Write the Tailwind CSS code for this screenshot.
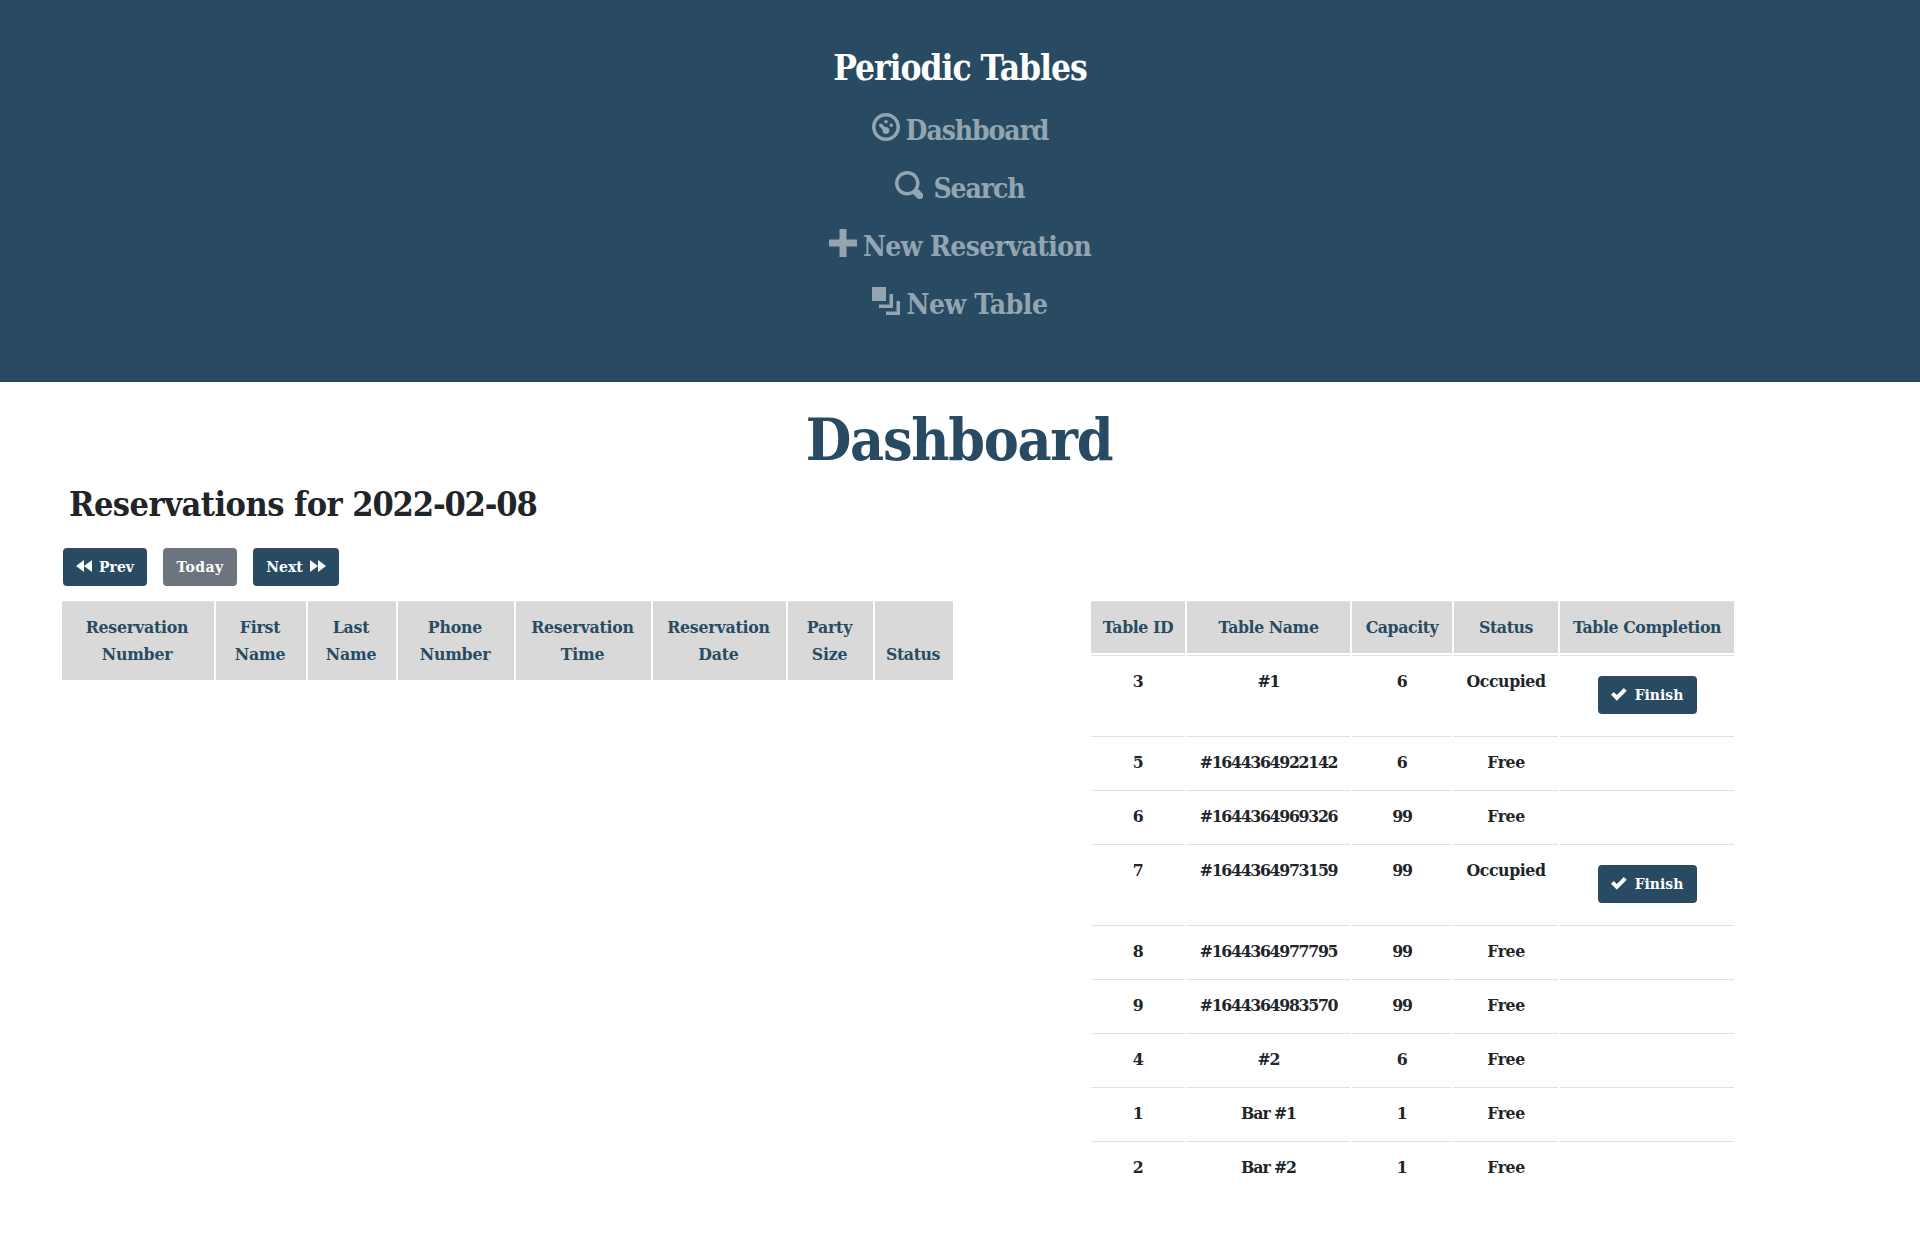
<!DOCTYPE html>
<html lang="en">
<head>
<meta charset="utf-8">
<title>Periodic Tables</title>
<script src="https://cdn.jsdelivr.net/npm/@tailwindcss/browser@4"></script>
</head>
<body class="bg-white text-[#212529] font-bold font-['Roboto_Slab','DejaVu_Serif_Condensed','DejaVu_Serif',serif]">
<svg class="hidden">
  <symbol id="dashboard" viewBox="0 0 8 8"><path d="M4 0c-2.2 0-4 1.8-4 4s1.8 4 4 4 4-1.8 4-4-1.8-4-4-4zm0 1c1.66 0 3 1.34 3 3s-1.34 3-3 3-3-1.34-3-3 1.34-3 3-3zm0 1c-.28 0-.5.22-.5.5s.22.5.5.5.5-.22.5-.5-.22-.5-.5-.5zm-1.66 1a.5.5 0 0 0-.19.84l.91.91c-.02.08-.06.16-.06.25 0 .55.45 1 1 1s1-.45 1-1-.45-1-1-1c-.09 0-.17.04-.25.06l-.91-.91a.5.5 0 0 0-.44-.16.5.5 0 0 0-.06 0zm3.16 0c-.28 0-.5.22-.5.5s.22.5.5.5.5-.22.5-.5-.22-.5-.5-.5z"/></symbol>
  <symbol id="search" viewBox="0 0 8 8"><path d="M3.5 0c-1.93 0-3.5 1.57-3.5 3.5s1.57 3.5 3.5 3.5c.59 0 1.17-.14 1.66-.41a1 1 0 0 0 .13.13l1 1a1.02 1.02 0 1 0 1.44-1.44l-1-1a1 1 0 0 0-.16-.13c.27-.49.44-1.06.44-1.66 0-1.93-1.55-3.5-3.5-3.5zm0 1c1.39 0 2.5 1.11 2.5 2.5 0 .66-.24 1.27-.66 1.72l-.03.03a1 1 0 0 0-.13.13c-.44.4-1.04.63-1.69.63-1.39 0-2.5-1.11-2.5-2.5s1.11-2.5 2.5-2.5z"/></symbol>
  <symbol id="plus" viewBox="0 0 8 8"><path d="M3 0v3h-3v2h3v3h2v-3h3v-2h-3v-3h-2z"/></symbol>
  <symbol id="layers" viewBox="0 0 8 8"><path d="M0 0v4h4v-4h-4zm5 2v3h-3v1h4v-4h-1zm2 2v3h-3v1h4v-4h-1z"/></symbol>
  <symbol id="back" viewBox="0 0 8 8"><path d="M4 0.5l-4 3 4 3v-6zm0 3l4 3v-6l-4 3z"/></symbol>
  <symbol id="forward" viewBox="0 0 8 8"><path d="M0 0.5v6l4-3-4-3zm4 3v3l4-3-4-3v3z"/></symbol>
  <symbol id="check" viewBox="0 0 8 8"><path d="M6.41 .5l-.69.72-2.78 2.78-.81-.78-.72-.72-1.41 1.41.72.72 1.5 1.5.69.72.72-.72 3.5-3.5.72-.72-1.44-1.41z"/></symbol>
</svg>

<nav class="h-[382px] bg-[#284b63] border-b border-[#23435a] flex flex-col items-center pt-[39px] text-[28px] leading-[58px]">
  <a class="text-white text-[35px] leading-[58px] tracking-[-1px] h-[63px]">Periodic Tables</a>
  <a class="flex items-start gap-1.5 h-[58px] text-white/50 tracking-[-1.05px]"><svg class="size-7 mt-[11px] fill-current"><use href="#dashboard"/></svg>Dashboard</a>
  <a class="flex items-start gap-2.5 h-[58px] text-white/50 tracking-[-1.05px]"><svg class="size-7 mt-[11px] fill-current"><use href="#search"/></svg>Search</a>
  <a class="flex items-start gap-1.5 h-[58px] text-white/50 tracking-[-0.6px]"><svg class="size-7 mt-[11px] fill-current"><use href="#plus"/></svg>New Reservation</a>
  <a class="flex items-start gap-1.5 h-[58px] text-white/50 tracking-[-0.45px]"><svg class="size-7 mt-[11px] fill-current"><use href="#layers"/></svg>New Table</a>
</nav>

<main>
  <h1 class="pt-[22px] pr-[2px] h-[92px] text-center text-[58.5px] leading-[72px] tracking-[-1.3px] text-[#284b63]">Dashboard</h1>
  <h2 class="pl-[69px] pt-2 h-[74px] text-[34px] leading-[44px] tracking-[-0.5px]">Reservations for <span class="tracking-[-1.15px]">2022-02-08</span></h2>

  <div class="ml-[63px] flex gap-4 h-[51px] text-[15.5px] leading-[18px] text-white">
    <button class="w-[84px] h-[38px] rounded bg-[#284b63] flex justify-center items-center gap-[7px]"><svg class="size-4 fill-current"><use href="#back"/></svg>Prev</button>
    <button class="w-[74px] h-[38px] rounded bg-[#6c757d] tracking-[0.4px]">Today</button>
    <button class="w-[86px] h-[38px] rounded bg-[#284b63] flex justify-center items-center gap-[7px]">Next<svg class="size-4 fill-current"><use href="#forward"/></svg></button>
  </div>

  <div class="flex items-start text-[17.5px] leading-[27px] tracking-[-0.3px] text-center">
    <table class="ml-[60px] w-[895px] table-fixed border-separate border-spacing-[2px]">
      <colgroup><col class="w-[152px]"><col class="w-[90px]"><col class="w-[88px]"><col class="w-[116px]"><col class="w-[135px]"><col class="w-[133px]"><col class="w-[85px]"><col class="w-[78px]"></colgroup>
      <thead class="text-[#284b63] tracking-[-0.2px] [&_th]:bg-[#d9d9d9] [&_th]:border-t [&_th]:border-[#dee2e6] [&_th]:pt-3 [&_th]:pb-3 [&_th]:pr-[2px] [&_th]:align-bottom [&_th]:h-[79px]">
        <tr><th>Reservation<br>Number</th><th>First<br>Name</th><th>Last<br>Name</th><th>Phone<br>Number</th><th>Reservation<br>Time</th><th>Reservation<br>Date</th><th>Party<br>Size</th><th class="tracking-[-0.4px]">Status</th></tr>
      </thead>
    </table>

    <table class="ml-[134px] w-[647px] table-fixed border-separate border-spacing-[2px]">
      <colgroup><col class="w-[94px]"><col class="w-[163px]"><col class="w-[100px]"><col class="w-[104px]"><col class="w-[174px]"></colgroup>
      <thead class="text-[#284b63] tracking-[-0.4px] [&_th]:bg-[#d9d9d9] [&_th]:border-t [&_th]:border-[#dee2e6] [&_th]:py-3 [&_th]:h-[52px]">
        <tr><th>Table ID</th><th>Table Name</th><th>Capacity</th><th>Status</th><th>Table Completion</th></tr>
      </thead>
      <tbody id="rows"></tbody>
    </table>
  </div>
</main>

<script>
const tables = [
  [3, '#1', 6, true], [5, '#1644364922142', 6, false], [6, '#1644364969326', 99, false],
  [7, '#1644364973159', 99, true], [8, '#1644364977795', 99, false], [9, '#1644364983570', 99, false],
  [4, '#2', 6, false], [1, 'Bar #1', 1, false], [2, 'Bar #2', 1, false],
];
const td = (html, extra = '') => `<td class="border-t border-[#dee2e6] pt-3 align-top ${extra}">${html}</td>`;
const finish = '<button class="mt-2 w-[99px] h-[38px] rounded bg-[#284b63] text-white text-[15.5px] leading-[18px] tracking-normal inline-flex justify-center items-center gap-2"><svg class="size-4 fill-current"><use href="#check"/></svg>Finish</button>';
document.getElementById('rows').innerHTML = tables.map(([id, name, cap, busy]) =>
  `<tr class="${busy ? 'h-[79px]' : 'h-[52px]'}">` +
  td(id) + td(name, name.length > 10 ? 'tracking-[-1.3px]' : 'tracking-[-1.1px]') + td(cap, cap > 9 ? 'tracking-[-1.3px]' : '') +
  td(busy ? 'Occupied' : 'Free', 'tracking-[-0.4px]') + td(busy ? finish : '') + '</tr>').join('');
</script>
</body>
</html>
